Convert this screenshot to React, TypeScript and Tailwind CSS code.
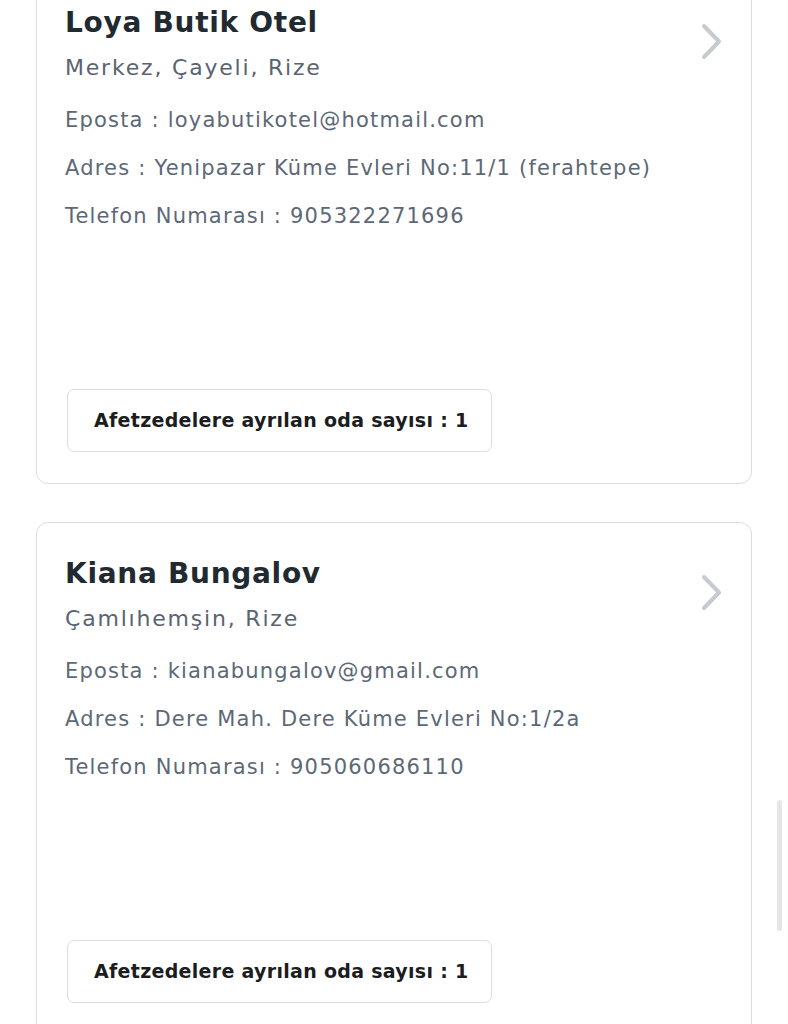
import React from 'react';

type Hotel = {
  name: string;
  location: string;
  email: string;
  address: string;
  phone: string;
  rooms: number;
};

const hotels: Hotel[] = [
  {
    name: 'Loya Butik Otel',
    location: 'Merkez, Çayeli, Rize',
    email: 'loyabutikotel@hotmail.com',
    address: 'Yenipazar Küme Evleri No:11/1 (ferahtepe)',
    phone: '905322271696',
    rooms: 1,
  },
  {
    name: 'Kiana Bungalov',
    location: 'Çamlıhemşin, Rize',
    email: 'kianabungalov@gmail.com',
    address: 'Dere Mah. Dere Küme Evleri No:1/2a',
    phone: '905060686110',
    rooms: 1,
  },
];

const Chevron = () => (
  <svg width="26" height="38" viewBox="0 0 26 38" fill="none">
    <path d="M7 4 L22 19.5 L7 35" stroke="#c6cbd0" strokeWidth="4" strokeLinecap="round" strokeLinejoin="round" />
  </svg>
);

const HotelCard: React.FC<{ hotel: Hotel }> = ({ hotel }) => (
  <div className="flex h-[513px] flex-col rounded-[12px] border border-[#dcdde0] bg-white pb-[31px] pl-[28px] pr-[30px] pt-[33px]">
    <div className="flex items-start justify-between">
      <div className="flex flex-col">
        <h2 className="text-[28px] font-bold leading-[36px] tracking-[0.7px] text-[#222a31]">{hotel.name}</h2>
        <p className="mt-[13px] text-[22px] leading-[28px] tracking-[1.8px] text-[#5a6370]">{hotel.location}</p>
      </div>
      <div className="mr-[-2px] pt-[17px]">
        <Chevron />
      </div>
    </div>
    <div className="mt-[14px] flex flex-col text-[21px] leading-[48px] tracking-[1.2px] text-[#5d6876]">
      <p>Eposta : {hotel.email}</p>
      <p>Adres : {hotel.address}</p>
      <p>Telefon Numarası : {hotel.phone}</p>
    </div>
    <div className="ml-[2px] mt-auto self-start">
      <div className="flex h-[63px] items-center rounded-[7px] border border-[#dcdde0] pl-[26px] pr-[22px] text-[19px] font-bold tracking-[0.3px] text-[#1b1d20]">
        Afetzedelere ayrılan oda sayısı : {hotel.rooms}
      </div>
    </div>
  </div>
);

export default function App() {
  return (
    <div className="relative h-[1024px] w-[788px] overflow-hidden bg-white font-['DejaVu_Sans',sans-serif]">
      <div className="mt-[-29px] flex flex-col gap-[38px] pl-[36px] pr-[36px]">
        {hotels.map((h) => (
          <HotelCard key={h.name} hotel={h} />
        ))}
      </div>
      <div className="absolute left-[777px] top-[800px] h-[131px] w-[5px] rounded-full bg-[#e6e6e6]" />
    </div>
  );
}
